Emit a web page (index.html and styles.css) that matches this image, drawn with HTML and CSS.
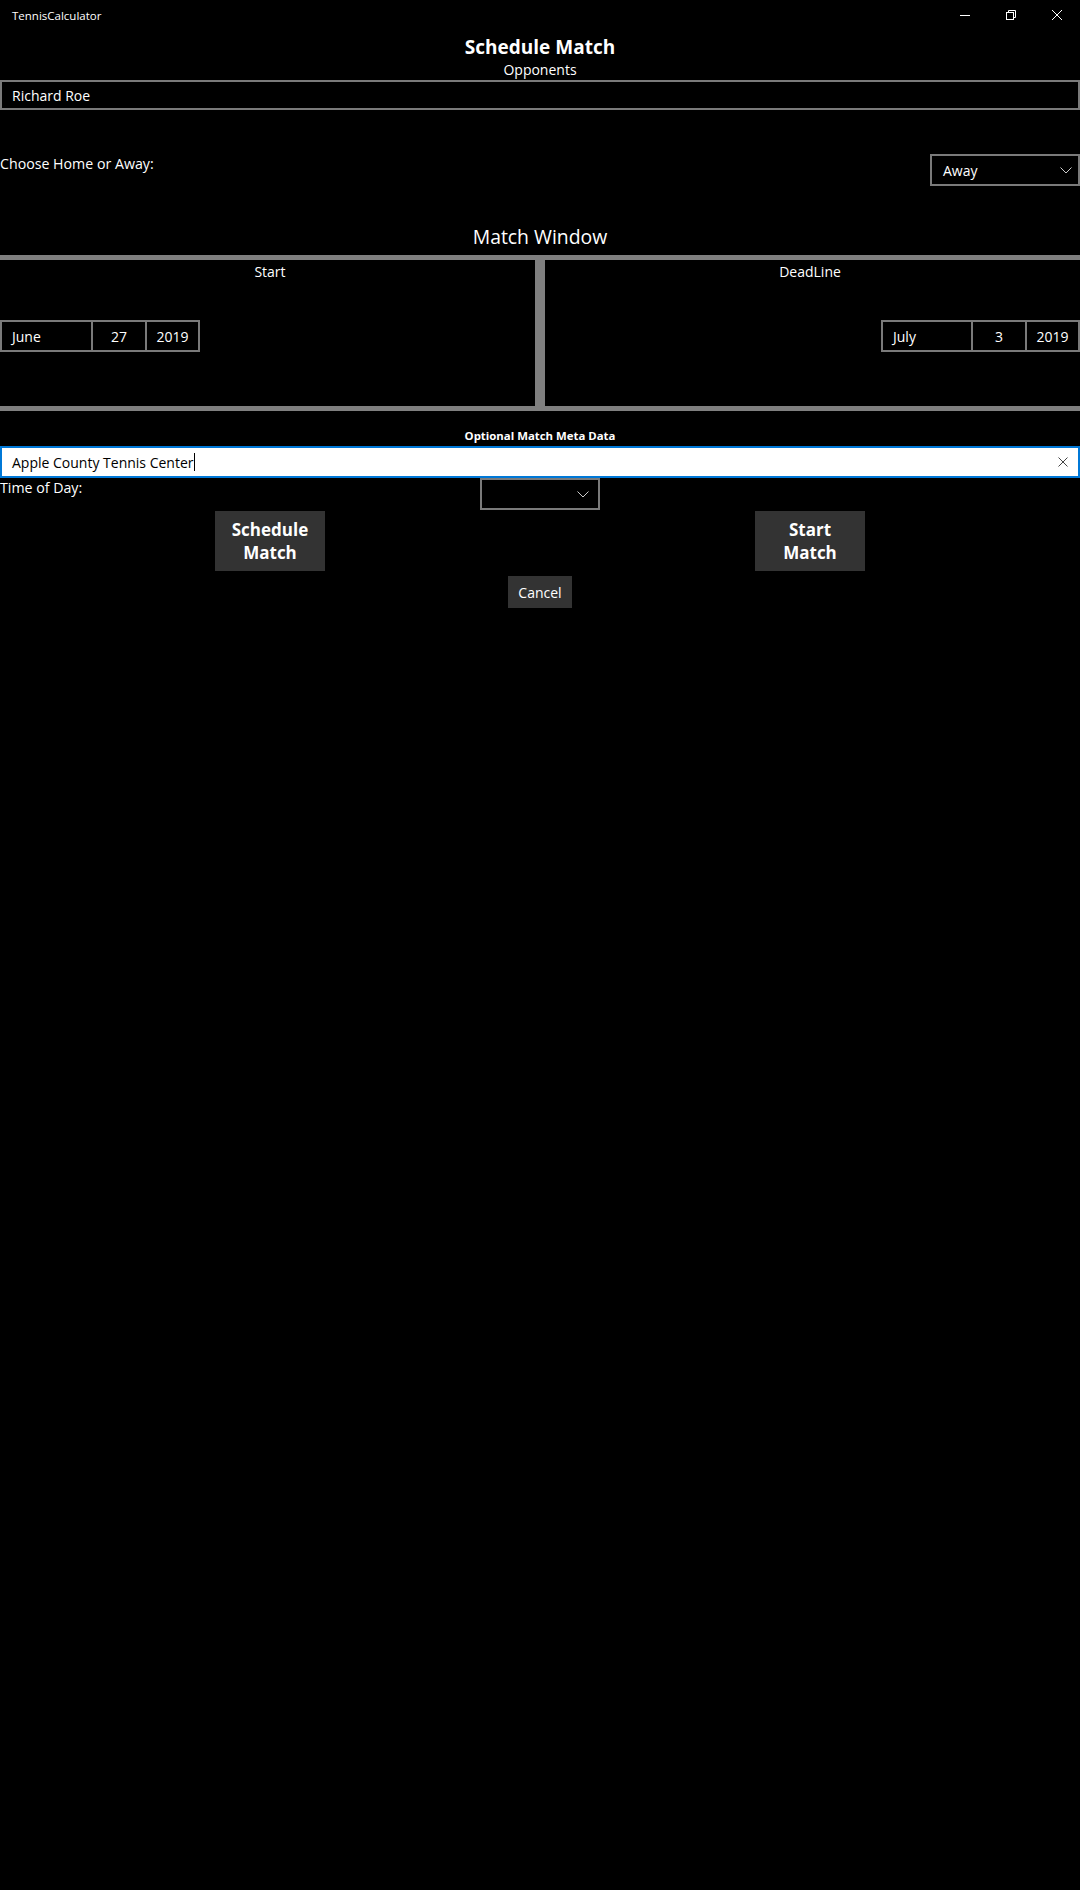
FILE: index.html
```html
<!DOCTYPE html>
<html>
<head>
<meta charset="utf-8">
<title>TennisCalculator</title>
<link rel="stylesheet" href="styles.css">
</head>
<body>
	<!-- window caption -->
	<div class="titlebar">
		<span class="app-name">TennisCalculator</span>
		<div class="caption-buttons">
			<span class="cap-btn">
				<svg width="12" height="12" viewBox="0 0 12 12"><path d="M1 6.5h10" stroke="#fff" stroke-width="1"/></svg>
			</span>
			<span class="cap-btn">
				<svg width="12" height="12" viewBox="0 0 12 12" fill="none" stroke="#fff" stroke-width="1"><rect x="1.5" y="3.5" width="7" height="7"/><path d="M3.5 3.5v-2h7v7h-2"/></svg>
			</span>
			<span class="cap-btn">
				<svg width="12" height="12" viewBox="0 0 12 12"><path d="M1 1l10 10M11 1L1 11" stroke="#fff" stroke-width="1"/></svg>
			</span>
		</div>
	</div>

	<div class="page">
		<h1 class="title">Schedule Match</h1>
		<div class="caption">Opponents</div>
		<div class="textbox">Richard Roe</div>

		<div class="home-row">
			<span class="label">Choose Home or Away:</span>
			<div class="combo combo-wide">
				<span>Away</span>
				<svg class="chevron" width="12" height="7" viewBox="0 0 12 7"><path d="M0.5 0.5L6 6l5.5-5.5" fill="none" stroke="#ccc" stroke-width="1"/></svg>
			</div>
		</div>

		<div class="section-title">Match Window</div>
		<div class="window-grid">
			<div class="cell cell-left">
				<div class="caption">Start</div>
				<div class="datepicker">
					<span class="dp-month">June</span>
					<span class="dp-day">27</span>
					<span class="dp-year">2019</span>
				</div>
			</div>
			<div class="cell cell-right">
				<div class="caption">DeadLine</div>
				<div class="datepicker">
					<span class="dp-month">July</span>
					<span class="dp-day">3</span>
					<span class="dp-year">2019</span>
				</div>
			</div>
		</div>

		<div class="meta-title">Optional Match Meta Data</div>
		<div class="textbox focused">
			<span class="value">Apple County Tennis Center</span><span class="caret"></span>
			<svg class="clear" width="10" height="10" viewBox="0 0 10 10"><path d="M0.5 0.5l9 9M9.5 0.5l-9 9" stroke="#444" stroke-width="1"/></svg>
		</div>

		<div class="time-row">
			<span class="label">Time of Day:</span>
			<div class="combo combo-small">
				<span></span>
				<svg class="chevron" width="12" height="7" viewBox="0 0 12 7"><path d="M0.5 0.5L6 6l5.5-5.5" fill="none" stroke="#ccc" stroke-width="1"/></svg>
			</div>
			<span></span>
		</div>

		<div class="actions">
			<div class="action-cell"><button class="big-btn">Schedule<br>Match</button></div>
			<div class="action-cell"><button class="big-btn">Start<br>Match</button></div>
		</div>
		<div class="cancel-row">
			<button class="small-btn">Cancel</button>
		</div>
	</div>
</body>
</html>
```

FILE: styles.css
```css
html, body {
	margin: 0;
	padding: 0;
	background: #000;
	color: #fff;
	font-family: "Open Sans", "Noto Sans", sans-serif;
}
body {
	width: 1080px;
	height: 1890px;
}

/* caption bar */
.titlebar {
	height: 32px;
	display: flex;
	align-items: center;
	justify-content: space-between;
}
.app-name {
	font-size: 11.5px;
	padding-left: 12px;
	margin-top: -2px;
}
.caption-buttons {
	display: flex;
	align-items: center;
	height: 32px;
}
.cap-btn {
	width: 46px;
	height: 32px;
	display: flex;
	align-items: center;
	justify-content: center;
	margin-top: -2px;
}

/* page body */
.title {
	margin: 2px 0 0 0;
	font-size: 19px;
	font-weight: 700;
	line-height: 26px;
	text-align: center;
}
.caption {
	font-size: 14px;
	line-height: 20px;
	text-align: center;
}
.label {
	font-size: 14.2px;
	line-height: 20px;
}
.textbox {
	height: 26px;
	border: 2px solid #7a7a7a;
	display: flex;
	align-items: center;
	padding-left: 10px;
	font-size: 14px;
}
.textbox.focused {
	height: 28px;
	margin-top: 2px;
	background: #fff;
	color: #000;
	border-color: #0078d7;
}
.caret {
	display: inline-block;
	width: 1px;
	height: 18px;
	background: #000;
}
.clear {
	margin-left: auto;
	margin-right: 10px;
}

.home-row {
	margin-top: 44px;
	display: flex;
	justify-content: space-between;
	align-items: flex-start;
}
.combo {
	box-sizing: border-box;
	height: 32px;
	border: 2px solid #7a7a7a;
	display: flex;
	align-items: center;
	justify-content: space-between;
	padding: 0 6px 0 11px;
	font-size: 14px;
}
.combo-wide {
	width: 150px;
}
.combo-small {
	width: 120px;
	padding-right: 9px;
}

.section-title {
	margin-top: 38px;
	font-size: 19.4px;
	line-height: 26px;
	text-align: center;
}

/* start / deadline panel */
.window-grid {
	margin-top: 5px;
	height: 146px;
	border-top: 5px solid #7f7f7f;
	border-bottom: 5px solid #7f7f7f;
	display: grid;
	grid-template-columns: 540px 540px;
}
.cell {
	box-sizing: border-box;
	padding-top: 2px;
	display: flex;
	flex-direction: column;
}
.cell-left {
	border-right: 5px solid #7f7f7f;
}
.cell-left .caption {
	margin-right: -5px;
}
.cell-right {
	border-left: 5px solid #7f7f7f;
	align-items: flex-end;
}
.cell-right .caption {
	align-self: stretch;
	margin-left: -5px;
}
.datepicker {
	margin-top: 38px;
	box-sizing: border-box;
	width: 200px;
	height: 32px;
	border: 2px solid #7a7a7a;
	display: grid;
	grid-template-columns: 89px 54px 1fr;
	font-size: 14px;
}
.cell-right .datepicker {
	width: 199px;
	grid-template-columns: 88px 54px 1fr;
}
.datepicker span {
	display: flex;
	align-items: center;
	justify-content: center;
}
.datepicker .dp-month {
	justify-content: flex-start;
	padding-left: 10px;
}
.datepicker .dp-day,
.datepicker .dp-year {
	border-left: 2px solid #7a7a7a;
}

.meta-title {
	margin-top: 17px;
	font-size: 11.4px;
	font-weight: 700;
	line-height: 16px;
	text-align: center;
}

.time-row {
	display: grid;
	grid-template-columns: 1fr 120px 1fr;
	align-items: start;
}

.actions {
	margin-top: 1px;
	display: grid;
	grid-template-columns: 540px 540px;
}
.action-cell {
	display: flex;
	justify-content: center;
}
.big-btn {
	width: 110px;
	height: 60px;
	border: none;
	background: #333;
	color: #fff;
	font-family: "Open Sans", "Noto Sans", sans-serif;
	font-size: 17px;
	font-weight: 700;
	line-height: 23px;
	padding: 0;
}
.cancel-row {
	margin-top: 5px;
	display: flex;
	justify-content: center;
}
.small-btn {
	width: 64px;
	height: 32px;
	border: none;
	background: #333;
	color: #fff;
	font-family: "Open Sans", "Noto Sans", sans-serif;
	font-size: 14px;
	padding: 0;
}
```
